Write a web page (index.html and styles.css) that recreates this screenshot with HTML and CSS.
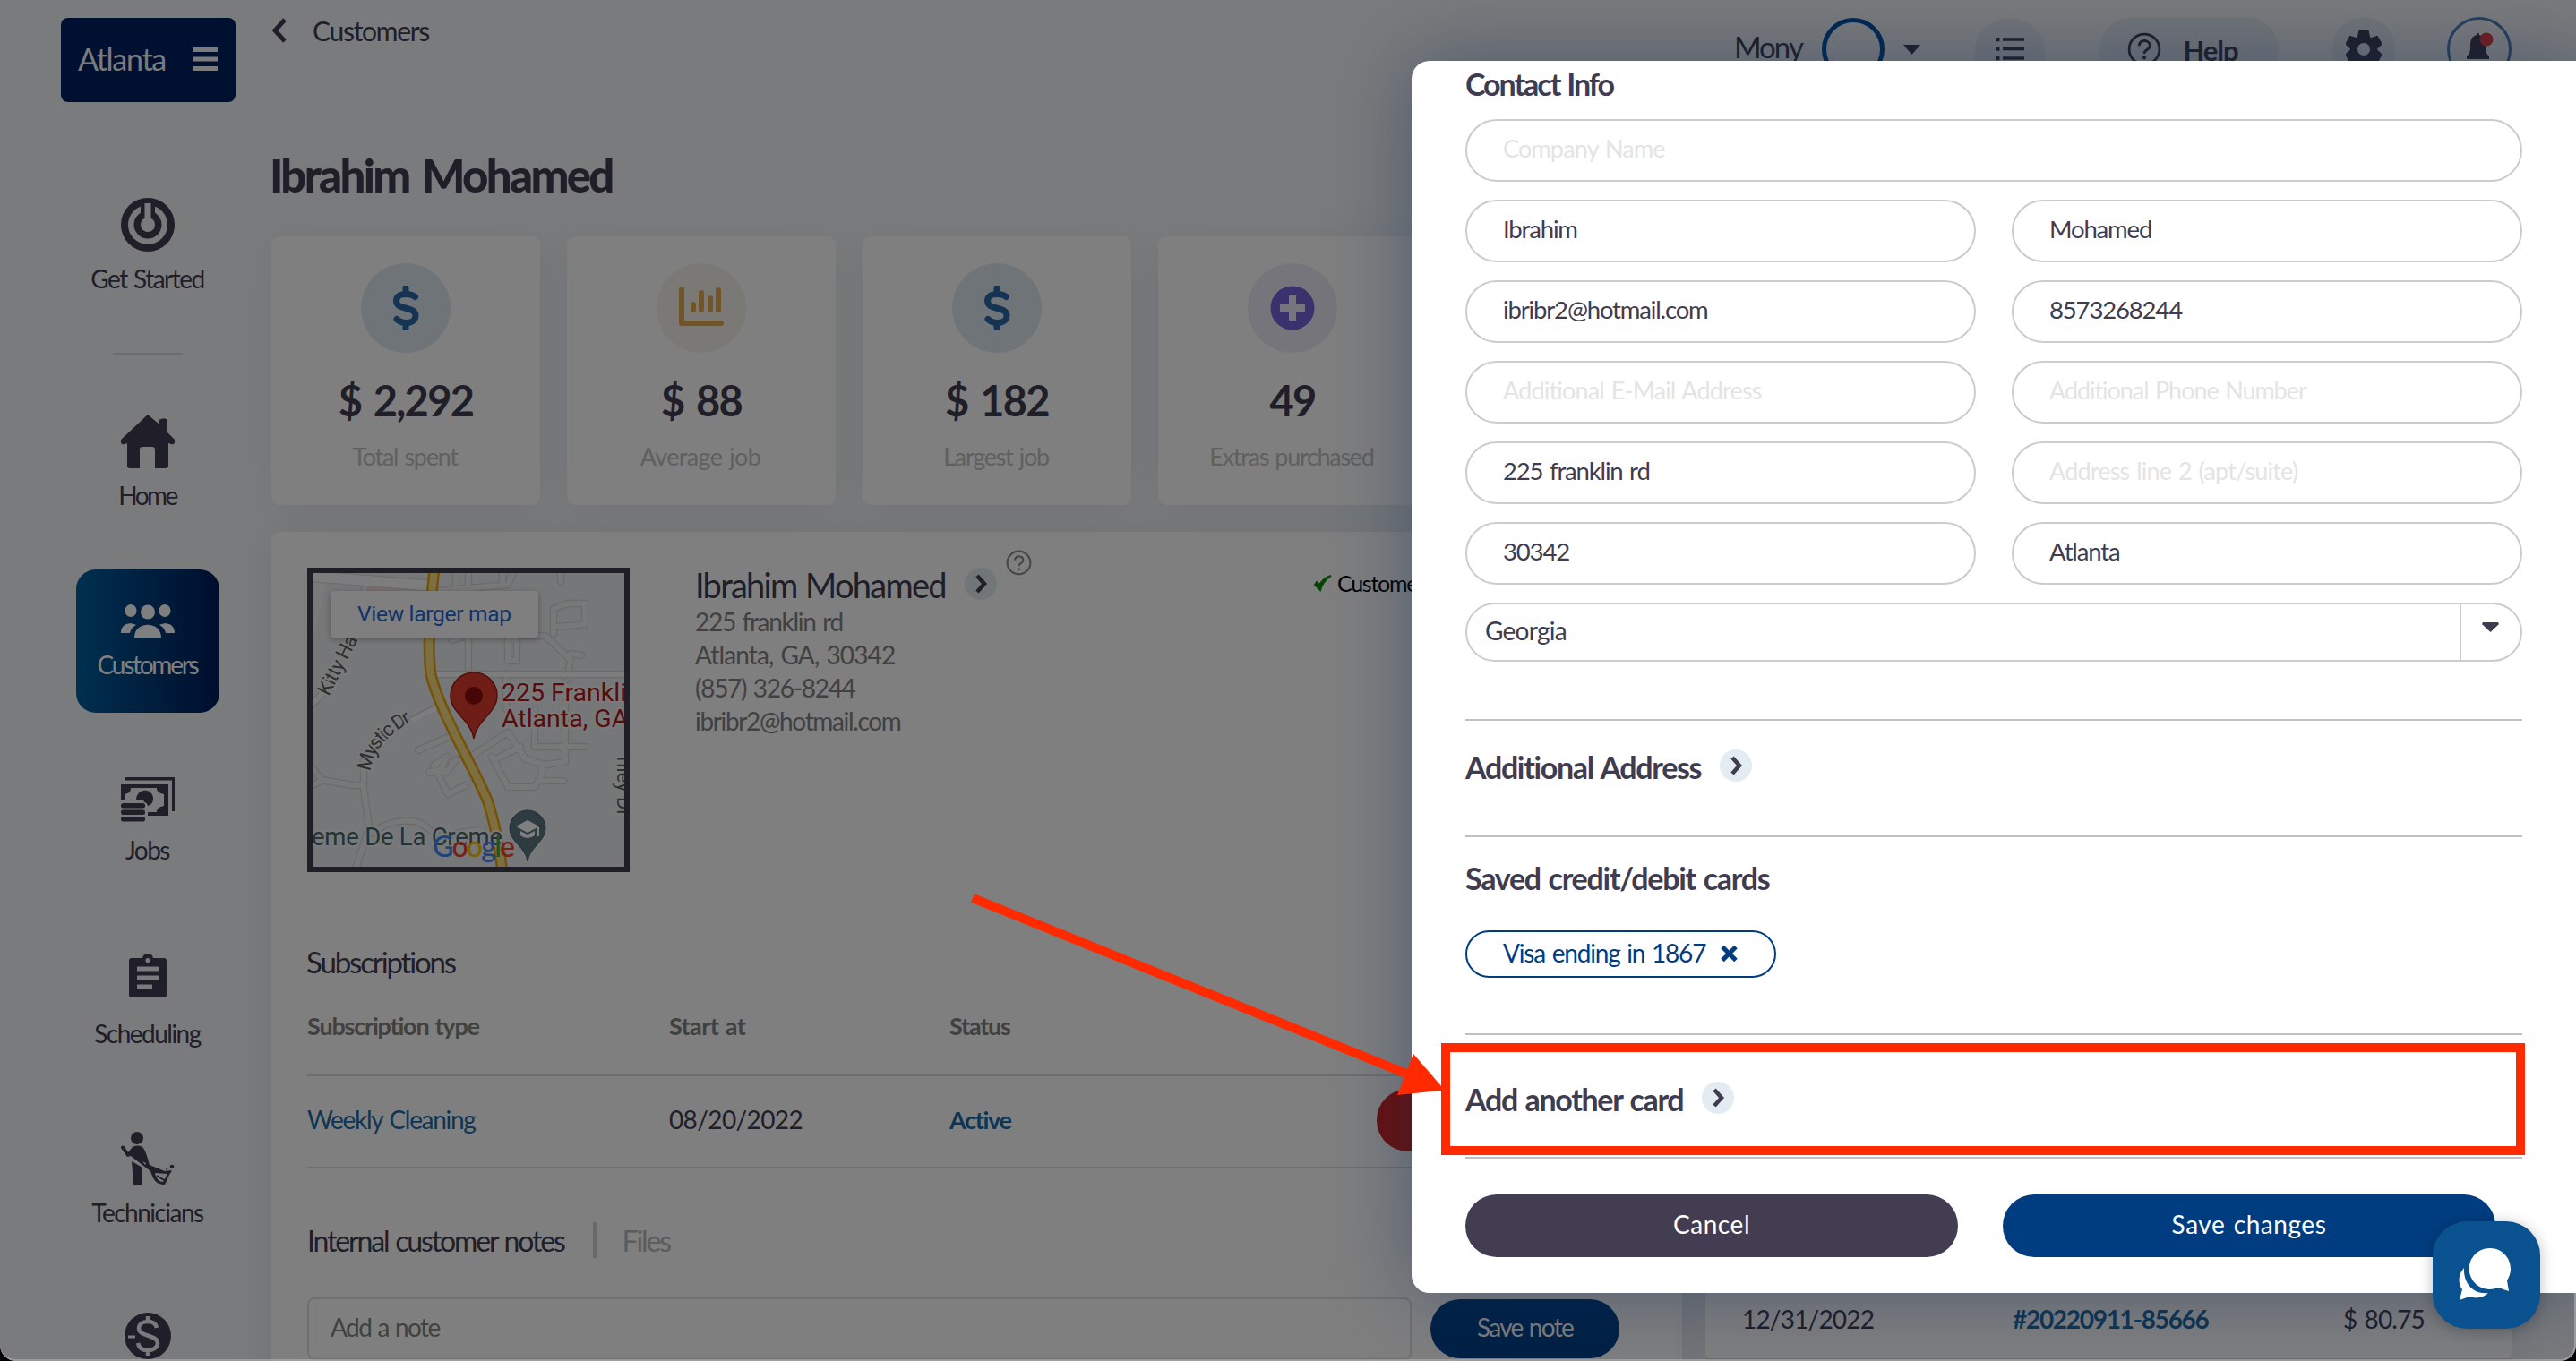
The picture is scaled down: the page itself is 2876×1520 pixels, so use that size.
FILE: index.html
```html
<!DOCTYPE html>
<html lang="en">
<head>
<meta charset="utf-8">
<title>Customers</title>
<link rel="stylesheet" href="styles.css">
</head>
<body>
<svg class="defs" width="0" height="0">
  <symbol id="dollar" viewBox="0 0 30 50"><path d="M25.5 12.5C22 9.500 18.500 9.500 15 9.500 8.500 9.500 4.500 12.500 4.500 17c0 11 21.500 5.500 21.500 16.500 0 4.500-4 8-10.500 8-4 0-7.500-1-10.500-4M15 2.500v6M15 42v5.500" fill="none" stroke="currentColor" stroke-width="7" stroke-linecap="round"/></symbol>
  <symbol id="chev" viewBox="0 0 36 36"><path d="M14 9l8 9-8 9" fill="none" stroke="#403c50" stroke-width="4.500"/></symbol>
  <symbol id="question" viewBox="0 0 36 36"><circle cx="18" cy="18" r="16" fill="none" stroke="currentColor" stroke-width="2.600"/><path d="M12.500 14.500c0-7.500 11.500-7 11.500 0 0 4-6 4-6 8" fill="none" stroke="currentColor" stroke-width="2.800"/><circle cx="18" cy="27" r="1.900" fill="currentColor"/></symbol>
</svg>
<div class="app">
  <nav class="side">
    <div class="logo"><span>Atlanta</span><svg width="28" height="26"><path d="M0 2.500h28M0 13h28M0 23.500h28" stroke="#f4f6f8" stroke-width="5"/></svg></div>
    <div class="nav n1">
      <svg width="60" height="60"><circle cx="30" cy="30" r="30" fill="#403c50"/><circle cx="30" cy="30" r="22" fill="#f2f4f7"/><circle cx="30" cy="30" r="15.500" fill="#403c50"/><path d="M22 7h16v18H22z" fill="#403c50"/><circle cx="30" cy="30" r="8" fill="#f2f4f7"/><path d="M26.500 6h7v18h-7z" fill="#f2f4f7"/></svg>
      <span>Get Started</span>
    </div>
    <i class="rule"></i>
    <div class="nav n2">
      <svg width="60" height="60" fill="#403c50"><path d="M30 0L0 28c-1 4 1 6 4 5l3-1v25c0 2 1 3 3 3h11V39c0-2 1-3 3-3h11c2 0 3 1 3 3v21h11c3 0 4-1 4-3V32l3 1c3 1 5-1 4-5l-8-8V6c0-2-8-2-9 0v5z"/></svg>
      <span class="tight">Home</span>
    </div>
    <div class="nav n3">
      <svg width="60" height="37" fill="#fff"><ellipse cx="11" cy="7" rx="6.500" ry="7"/><ellipse cx="49" cy="7" rx="6.500" ry="7"/><circle cx="30" cy="8.500" r="8"/><path d="M15 37c0-19 30-19 30 0zM0 32C0 22 9 19 17 23c-4 2-6 5-7 9zM60 32c0-10-9-13-17-9 4 2 6 5 7 9z"/></svg>
      <span class="cust">Customers</span>
    </div>
    <div class="nav n4">
      <svg width="60" height="50" fill="#403c50"><path d="M4 0h56v38h-3V3.500H4z"/><path fill-rule="evenodd" d="M0 8h53v35H30v-4h10c0-4 3-6 8-7v-13c-5-1-8-3-8-7H11c0 4-2 6-7 7v6H0z"/><path d="M17 25c1-14 19-13 19-1 0 4-2 7-6 8-1-3-2-4-4-4l-1-3z"/><rect y="29" width="27" height="5.500" rx="2.500"/><rect y="36.500" width="27" height="5.500" rx="2.500"/><rect y="44" width="27" height="5.500" rx="2.500"/></svg>
      <span>Jobs</span>
    </div>
    <div class="nav n5">
      <svg width="44" height="50"><path d="M4 5h12c1-7 11-7 12 0h12c2 0 3 1 3 3v38c0 2-1 3-3 3H4c-2 0-3-1-3-3V8c0-2 1-3 3-3z" fill="#403c50"/><circle cx="22" cy="7.500" r="2.600" fill="#f2f4f7"/><path d="M10 17h24M10 27h24M10 37h17" stroke="#f2f4f7" stroke-width="5"/></svg>
      <span>Scheduling</span>
    </div>
    <div class="nav n6">
      <svg width="60" height="60" fill="#403c50"><circle cx="18" cy="7" r="7"/><path d="M0 18c0-3 3-3 4-1l4 6 5-6c3-2 8-2 11 0 4 4 6 14 8 20l17 7 7-1c1 1 0 3-1 3l-6 13c-10 0-13-6-16-15L11 27l-4 1zM12 33l12 7-1 19h-9z"/><path d="M38 46l14 1-5 9c-5 0-8-5-9-10z" fill="#f2f4f7"/><path d="M40 49l10 6" stroke="#403c50" stroke-width="2"/><path d="M24 33l3 4 1-2z" fill="#f2f4f7"/><circle cx="57" cy="39" r="2.300"/><circle cx="51" cy="42" r="1"/></svg>
      <span>Technicians</span>
    </div>
    <div class="nav n7">
      <svg width="52" height="52"><circle cx="26" cy="26" r="26" fill="#403c50"/><path d="M36 17c-1-5-5-7-10-7-6 0-10 3-10 7.500 0 10 21 6.500 21 16.500 0 5-5 8-11 8s-10-3-11-8M26 4v8M26 40v8" fill="none" stroke="#f2f4f7" stroke-width="4.500"/><path d="M4 27h8" stroke="#f2f4f7" stroke-width="3"/></svg>
    </div>
  </nav>
  <main>
    <header class="top">
      <div class="back"><svg width="18" height="28"><path d="M15 2L4 14l11 12" fill="none" stroke="#403c50" stroke-width="5"/></svg><span>Customers</span></div>
      <div class="tools">
        <span class="user">Mony</span>
        <i class="avatar"></i>
        <svg class="caret" width="19" height="11"><path d="M0 0h19l-9.500 11z" fill="#403c50"/></svg>
        <span class="tool list"><svg width="34" height="26"><path d="M9 2h24M9 12.500h24M9 23h24" stroke="#403c50" stroke-width="3.500"/><path d="M1 2h4.500M1 12.500h4.500M1 23h4.500" stroke="#403c50" stroke-width="4.500"/></svg></span>
        <span class="tool help"><svg width="38" height="38"><use href="#question"/></svg><b>Help</b></span>
        <span class="tool gear"><svg width="40" height="42" viewBox="-20 -21 40 42"><g fill="#403c50"><circle r="15"/><path id="t" d="M-5.500-21h11l2 9h-15zM-5.500 21h11l2-9h-15z"/><use href="#t" transform="rotate(60)"/><use href="#t" transform="rotate(120)"/></g><circle r="7" fill="#e4ebf0"/></svg></span>
        <span class="tool bell"><svg width="40" height="42"><path d="M17 5c0-3 3-3 3 0 7 2 7 8 7 13 0 6 1 8 4 11v3H6v-3c3-3 4-5 4-11 0-5 0-11 7-13zM14 34h9c0 5-9 5-9 0z" fill="#403c50"/><circle cx="28" cy="10" r="7.500" fill="#e83a3a"/></svg></span>
      </div>
    </header>
    <h1>Ibrahim Mohamed</h1>
    <section class="stats">
      <div class="card"><i class="disc blue"><svg width="30" height="50"><use href="#dollar"/></svg></i><strong>$ 2,292</strong><span>Total spent</span></div>
      <div class="card"><i class="disc sand"><svg width="50" height="48"><path d="M3 3v38h44" fill="none" stroke="#e4a853" stroke-width="6" stroke-linecap="round" stroke-linejoin="round"/><path d="M16 20v6M25 7v19M35 13v13M44 4v22" stroke="#e4a853" stroke-width="6" stroke-linecap="round"/></svg></i><strong>$ 88</strong><span class="wide">Average job</span></div>
      <div class="card"><i class="disc blue"><svg width="30" height="50"><use href="#dollar"/></svg></i><strong>$ 182</strong><span>Largest job</span></div>
      <div class="card"><i class="disc violet"><svg width="50" height="50"><circle cx="25" cy="25" r="24.500" fill="#7265d8"/><path d="M15 25h20M25 15v20" stroke="#f0edfa" stroke-width="8" stroke-linecap="square"/></svg></i><strong>49</strong><span>Extras purchased</span></div>
    </section>
    <div class="panels">
      <section class="panel main-panel">
        <div class="person">
          <div class="map">
            <svg width="348" height="328" viewBox="0 0 348 328">
              <defs><path id="streets" d="M58 6v16M160 0v18M212 0v12M277-5v14M174 0v112M140 20l78-7 6-13M224 75v-12M224 70h36l28 27-4 22M288 90l12 2M269 68V40l16-6h19v23l-30 3M218 70v28h10V70M156 75l14-5M216 112v40M0 270M0 218l10 13 35 6h10M57 200v40l6 45-16 48M10 232l-12 6M118 198l34-15M148 208l-3 10-12 5M150 205l-15 10 16 32 20-10M130 222l20 0 10-14M178 204l40-26 20 30 22 6 22-3V145M248 152v42h56M200 205l18 34h30l8-15V214M256 232h24M204 208l28-14M62 292c30-20 55-19 68-6l10 8 50-8"/><path id="highway" d="M136-5Q127 75 132 113C142 156 180 216 196 256 206 290 209 310 212 335"/></defs>
              <rect width="348" height="328" fill="#ebeef1"/>
              <path d="M0 0h18L0 75z" fill="#f3f4f5"/>
              <path d="M60 8l70 6v10H60z" fill="#f3dcda"/>
              <g fill="none" stroke-linejoin="round" stroke-linecap="round">
                <use href="#streets" stroke="#d3d5d8" stroke-width="8.500"/>
                <use href="#streets" stroke="#eff0f1" stroke-width="6"/>
                <path d="M-8 3l138 11" stroke="#d3d5d8" stroke-width="13"/><path d="M-8 3l138 11" stroke="#fafafa" stroke-width="11"/>
                <path d="M138 113h220M0 146l20-20M137 151l-25 12" stroke="#d6d8db" stroke-width="8.500"/><path d="M138 113h220M0 146l20-20M140 150l-28 14" stroke="#fafafa" stroke-width="6"/>
                <use href="#highway" stroke="#e9a60c" stroke-width="13"/>
                <use href="#highway" stroke="#fbdf85" stroke-width="8"/>
              </g>
              <g class="halo" font-family="Roboto" fill="#5c5f63" font-size="22">
                <text transform="translate(18 138) rotate(-63)" textLength="72">Kitty Ha</text>
                <path id="mystic" d="M65 222Q67 187 118 162" fill="none" stroke="none"/>
                <text textLength="76"><textPath href="#mystic">Mystic Dr</textPath></text>
                <text transform="translate(340 205) rotate(90)">nley Dr</text>
                <text x="-1" y="304" font-size="27.500" fill="#47666f" textLength="213">eme De La Creme</text>
                <text x="211" y="143" font-size="28.500" fill="#b3181c">225 Frankli</text>
                <text x="211" y="172" font-size="28.500" fill="#b3181c">Atlanta, GA</text>
              </g>
              <path d="M180 185c-3-21-26-29-26-48a26 26 0 0 1 52 0c0 19-23 27-26 48z" fill="#dc3b2e" stroke="#a52019" stroke-width="1.500"/><circle cx="180" cy="137" r="10" fill="#8c0c0b"/>
              <path d="M240 322c-2-16-20-22-20-37a20 20 0 0 1 40 0c0 15-18 21-20 37z" fill="#5c7681" stroke="#435b66" stroke-width="1"/><path d="M227 283l13-7 13 7-13 7zM232 288v5q8 6 16 0v-5l-8 4zM251 284h2v10h-2z" fill="#fff"/>
              <text x="134" y="317" class="google" textLength="92"><tspan fill="#4285f4">G</tspan><tspan fill="#ea4335">o</tspan><tspan fill="#fbbc05">o</tspan><tspan fill="#4285f4">g</tspan><tspan fill="#34a853">l</tspan><tspan fill="#ea4335">e</tspan></text>
              <rect x="20" y="20" width="232" height="52" rx="3" fill="#fff" class="lift"/>
              <text x="50" y="54" font-family="Roboto" font-size="24.500" fill="#1f66d8" textLength="172">View larger map</text>
            </svg>
          </div>
          <div class="info">
            <div class="name"><span>Ibrahim Mohamed</span><svg class="go" width="36" height="36"><use href="#chev"/></svg><svg class="tip" width="29" height="29"><use href="#question"/></svg></div>
            <p>225 franklin rd</p><p class="city">Atlanta, GA, 30342</p><p>(857) 326-8244</p><p class="mail">ibribr2@hotmail.com</p>
          </div>
          <div class="status"><svg width="21" height="19"><path d="M2 11l6 6C10 10 14 5 20 1 13 3 10 7 7 11L4 8z" fill="#0a8a0a" stroke="#0a8a0a" stroke-width="2"/></svg><span>Customer</span></div>
        </div>
        <h2 class="subs">Subscriptions</h2>
        <div class="row head"><b>Subscription type</b><b class="start">Start at</b><b>Status</b></div>
        <div class="row"><a>Weekly Cleaning</a><span class="date">08/20/2022</span><a class="active">Active</a><i class="cancel-sub"></i></div>
        <div class="tabs"><span>Internal customer notes</span><i></i><span class="off">Files</span></div>
        <div class="note"><div class="note-in">Add a note</div><div class="note-btn">Save note</div></div>
      </section>
      <section class="panel invoices">
        <div class="inv"><span>12/31/2022</span><b>#20220911-85666</b><span class="sum">$ 80.75</span></div>
      </section>
    </div>
  </main>
  <div class="shade"></div>
  <div class="modal">
    <h3>Contact Info</h3>
    <div class="form">
      <div class="f full ph">Company Name</div>
      <div class="f">Ibrahim</div><div class="f">Mohamed</div>
      <div class="f">ibribr2@hotmail.com</div><div class="f">8573268244</div>
      <div class="f ph">Additional E-Mail Address</div><div class="f ph phone">Additional Phone Number</div>
      <div class="f">225 franklin rd</div><div class="f ph">Address line 2 (apt/suite)</div>
      <div class="f">30342</div><div class="f">Atlanta</div>
      <div class="select full"><span>Georgia</span><i><svg width="19" height="11"><path d="M1 0h17l1 2-9.500 9L0 2z" fill="#403c50"/></svg></i></div>
    </div>
    <div class="block addr"><h3>Additional Address</h3><svg class="go" width="36" height="36"><use href="#chev"/></svg></div>
    <div class="block cards"><h3>Saved credit/debit cards</h3><div class="chip"><span>Visa ending in 1867</span><svg width="19" height="18"><path d="M2 1.500l15 15M17 1.500l-15 15" stroke="#003d80" stroke-width="5"/></svg></div></div>
    <div class="block another"><h3>Add another card</h3><svg class="go" width="36" height="36"><use href="#chev"/></svg></div>
    <div class="block actions"><div class="btn grey">Cancel</div><div class="btn">Save changes</div></div>
  </div>
  <div class="frame"></div>
  <svg class="arrow" width="1640" height="1300"><path d="M1086 1003L1575 1201" stroke="#ff2a00" stroke-width="10"/><path d="M1613 1217.500L1578 1177L1560 1223z" fill="#ff2a00"/></svg>
  <div class="mark"></div>
  <div class="chat"><svg width="60" height="60" viewBox="0 0 60 60"><path d="M36 2a23 23 0 1 0 9 44l12 4-2-12A23 23 0 0 0 36 2z" fill="#fff"/><path d="M7 24C-1 33 1 43 5 48L2 60l11-4c8 3 16 1 21-4C19 54 6 43 7 24z" fill="#fff"/></svg></div>
</div>
</body>
</html>
```
FILE: styles.css
```css
* { box-sizing: border-box; }
body { margin: 0; background: #000; font: 28px/1.2 Lato, "Liberation Sans", sans-serif; letter-spacing: -.046em; word-spacing: .06em; color: #403c50; font-variant-ligatures: none; }
h1, h2, h3, p { margin: 0; }
svg { display: block; flex: none; }
.defs { position: absolute; }
.app { position: relative; width: 2876px; height: 1520px; overflow: hidden; border-radius: 0 0 18px 18px; background: #f4f7f9; display: grid; grid-template-columns: 303px 1fr; }

.side { height: 1520px; overflow: hidden; padding-top: 20px; display: flex; flex-direction: column; }
.logo { flex: none; width: 195px; height: 94px; margin-left: 68px; padding: 0 20px 2px 19px; border-radius: 8px; background: #002163; color: #f4f6f8; display: flex; align-items: center; justify-content: space-between; font-size: 34px; }
.nav { flex: none; width: 160px; margin-left: 85px; display: flex; flex-direction: column; align-items: center; gap: 13px; white-space: nowrap; letter-spacing: -.054em; line-height: 34px; }
.nav span { margin-left: -1px; }
.n1 { margin-top: 107px; }
.rule { flex: none; width: 78px; height: 2px; margin: 66px 0 67px 126px; background: #d6d9dd; }
.nav .tight { letter-spacing: -.09em; }
.nav .cust { letter-spacing: -.08em; }
.n3 { margin-top: 66px; height: 160px; padding-top: 39px; border-radius: 22px; background: linear-gradient(90deg, #00609f, #001c5b); color: #fff; }
.n4 { margin-top: 72px; gap: 14px; }
.n5 { margin-top: 99px; gap: 22px; }
.n6 { margin-top: 93px; }
.n7 { margin-top: 95px; }

.top { height: 165px; display: flex; justify-content: space-between; align-items: flex-start; padding-right: 72px; }
.back { display: flex; align-items: center; gap: 28px; padding-top: 16px; font-size: 30px; }
.tools { display: flex; align-items: center; padding-top: 18px; height: 92px; }
.user { font-size: 33px; letter-spacing: -.059em; margin: 0 22px 5px 0; }
.avatar { width: 70px; height: 70px; border: 5px solid #0051a4; border-radius: 50%; margin-right: 21px; }
.caret { margin-right: 60px; }
.tool { height: 72px; border-radius: 36px; background: #e4ebf0; display: flex; align-items: center; justify-content: center; margin-right: 60px; }
.list { width: 80px; height: 80px; border-radius: 40px; margin-top: 10px; padding-bottom: 10px; }
.help { width: 200px; gap: 24px; padding-right: 14px; }
.help b { font-size: 31px; letter-spacing: -.034em; margin-top: 3px; }
.gear { width: 70px; margin-right: 58px; }
.bell { width: 72px; margin-right: 0; border: 3px solid #4f7fbc; background: none; }
h1 { font-size: 51px; font-weight: 900; line-height: 61px; letter-spacing: -.053em; word-spacing: .1em; margin-left: -2px; }

.stats { position: relative; z-index: 0; display: flex; gap: 30px; margin-top: 38px; }
.card { width: 300px; height: 300px; border-radius: 9px; background: #fff; box-shadow: 0 4px 44px rgba(130, 145, 165, .15); padding-top: 30px; display: flex; flex-direction: column; align-items: center; font-size: 27px; color: #c0c0c0; }
.card strong { font-size: 47px; line-height: 56px; letter-spacing: -.036em; word-spacing: .08em; color: #403c50; margin-top: 25px; }
.card span { margin: 19px 2px 0 0; }
.card .wide { letter-spacing: -.024em; }
.disc { width: 100px; height: 100px; border-radius: 50%; display: flex; align-items: center; justify-content: center; }
.blue { background: #dfe9f0; color: #2b66a5; }
.sand { background: #f6f3ec; }
.violet { background: #edeaf6; }

.panels { display: flex; gap: 26px; margin-top: 30px; height: 960px; }
.panel { background: #fff; border-radius: 9px; box-shadow: 0 6px 50px rgba(120, 135, 160, .2); }
.main-panel { width: 1575px; padding: 40px 40px 0; }
.person { display: flex; height: 340px; align-items: flex-start; }
.map { width: 360px; height: 340px; border: 6px solid #403e50; overflow: hidden; letter-spacing: 0; word-spacing: 0; }
.halo text { paint-order: stroke; stroke: #f2f4f5; stroke-width: 4px; }
.google { font: 500 32px Lato; }
.lift { filter: drop-shadow(0 2px 3px rgba(0, 0, 0, .3)); }
.info { width: 690px; margin: -4px 0 0 73px; color: #828282; line-height: 37px; }
.name { display: flex; height: 46px; align-items: center; font-size: 38px; color: #403c50; letter-spacing: -.046em; }
.name .go { margin: 0 10px 2px 21px; }
.go { border-radius: 50%; background: #e3ecf2; }
.name .tip { margin-bottom: 49px; color: #8d8d92; }
.city { letter-spacing: -.031em; }
.mail { letter-spacing: -.048em; }
.status { display: flex; gap: 6px; align-items: center; font-size: 25px; color: #000; margin-top: 2px; width: 64px; white-space: nowrap; }
.subs { font-size: 33px; font-weight: 400; line-height: 40px; letter-spacing: -.065em; margin-top: 80px; margin-left: -1px; }
.row { display: grid; grid-template-columns: 404px 313px 477px 300px; align-items: center; height: 103px; border-bottom: 2px solid #dcdcde; padding-bottom: 3px; }
.row.head { height: 108px; font-size: 27px; color: #828282; padding-bottom: 2px; letter-spacing: -.044em; }
.row .start, .date { letter-spacing: -.022em; }
.row a { color: #1d6ba8; }
.row a.active { font-weight: 700; font-size: 27px; letter-spacing: -.049em; }
.cancel-sub { height: 70px; border-radius: 35px; background: #d0201f; }
.tabs { display: flex; align-items: center; margin-top: 60px; height: 40px; font-size: 32px; letter-spacing: -.067em; }
.tabs i { width: 4px; height: 40px; margin: 0 29px 0 32px; background: #d5d5d5; }
.tabs span { padding-top: 2px; }
.tabs .off { color: #b8b8b8; }
.note { display: flex; gap: 21px; margin-top: 44px; align-items: center; width: 1480px; }
.note-in { width: 1233px; height: 70px; border: 2px solid #e0e0e0; border-radius: 8px; padding: 15px 24px; color: #828282; letter-spacing: -.057em; }
.note-btn { width: 211px; height: 66px; border-radius: 33px; background: #00408a; color: #fff; text-align: center; line-height: 63px; letter-spacing: -.06em; }
.invoices { width: 900px; height: 926px; padding-bottom: 1px; display: flex; flex-direction: column; justify-content: flex-end; }
.inv { display: grid; grid-template-columns: 302px 1fr auto; height: 90px; padding: 2px 97px 0 41px; align-items: center; border-bottom: 2px solid #dcdcde; letter-spacing: -.029em; }
.inv b { color: #1d6ba8; letter-spacing: -.046em; }

.shade { position: absolute; inset: 0; background: rgba(0, 0, 0, .5); }
.frame { position: absolute; inset: 1444px 0 0 0; border: solid rgba(190, 190, 195, .5); border-width: 0 2px 2px 0; border-radius: 0 0 18px 18px; }
.modal { position: absolute; left: 1576px; top: 68px; width: 1320px; height: 1376px; border-radius: 20px; background: #fff; box-shadow: 0 0 90px rgba(20, 48, 90, .44); padding: 5px 80px 0 60px; }
h3 { font-size: 34px; line-height: 41px; letter-spacing: -.036em; }
.modal > h3 { letter-spacing: -.06em; }
.form { display: grid; grid-template-columns: 570px 570px; column-gap: 40px; row-gap: 20px; margin-top: 19px; }
.full { grid-column: 1 / 3; }
.f { height: 70px; border: 2px solid #ccc; border-radius: 35px; padding: 0 40px; line-height: 62px; font-size: 27.500px; letter-spacing: -.042em; }
.ph { color: #e4e4e4; font-size: 27px; letter-spacing: -.03em; }
.phone { letter-spacing: -.039em; }
.select { height: 66px; border: 2px solid #ccc; border-radius: 33px; display: flex; justify-content: space-between; line-height: 59px; padding-left: 20px; letter-spacing: -.026em; }
.select i { width: 68px; border-left: 2px solid #ccc; padding: 20px 0 0 23px; }
.block { width: 1180px; border-top: 2px solid #bfbfc4; display: flex; }
.block .go { margin-left: 21px; margin-top: 1px; }
.addr { margin-top: 64px; height: 130px; padding-top: 31px; }
.block h3 { letter-spacing: -.039em; }
.cards { height: 221px; padding-top: 25px; flex-direction: column; align-items: flex-start; }
.cards h3 { letter-spacing: -.037em; }
.chip { width: 347px; height: 53px; margin-top: 38px; border: 2.500px solid #003d80; border-radius: 27px; color: #003d80; display: flex; align-items: center; gap: 17px; padding: 0 0 1px 40px; letter-spacing: -.042em; }
.another { height: 138px; padding-top: 51px; }
.actions { gap: 50px; padding-top: 40px; }
.btn { width: 550px; height: 70px; border-radius: 35px; background: #003d80; color: #fff; text-align: center; line-height: 67px; letter-spacing: .02em; }
.grey { background: #433d51; }
.mark { position: absolute; left: 1609px; top: 1165px; width: 1210px; height: 125px; border: 10px solid #ff2a00; }
.arrow { position: absolute; left: 0; top: 0; }
.chat { position: absolute; left: 2716px; top: 1364px; width: 120px; height: 120px; border-radius: 38px; background: #0a5190; box-shadow: 0 2px 16px rgba(0, 0, 0, .25); padding: 28px; }
```
